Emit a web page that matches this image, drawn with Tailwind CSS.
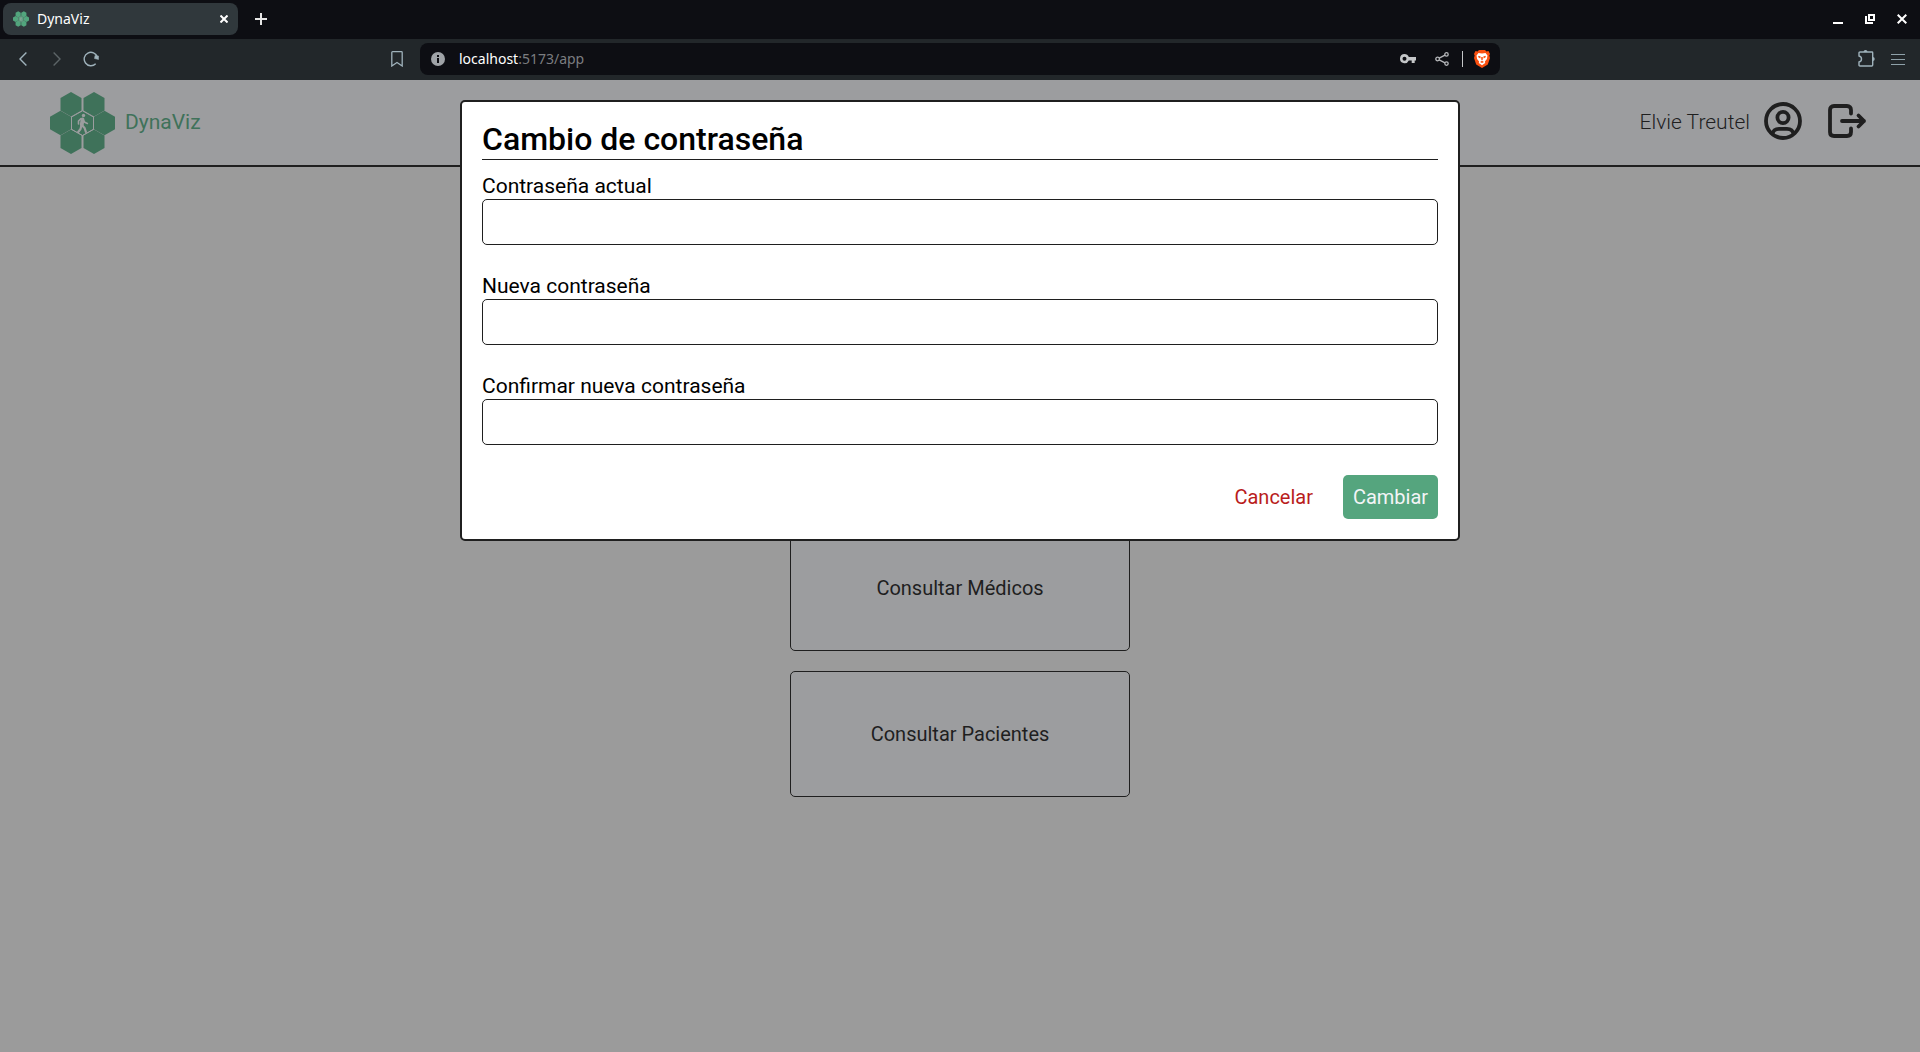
<!DOCTYPE html>
<html lang="es">
<head>
<meta charset="utf-8">
<title>DynaViz</title>
<script src="https://cdn.jsdelivr.net/npm/@tailwindcss/browser@4"></script>
</head>
<body class="flex min-h-screen flex-col bg-[#9b9b9b] font-[Roboto,sans-serif] text-xl text-[#1f1f1f]">
<svg class="hidden">
  <symbol id="logo" viewBox="0 0 65 62">
    <g fill="currentColor">
      <path id="hex" d="M21 0l10.500 6v12.500L21 24.500L10.500 18.500V6z"/>
      <use href="#hex" x="23"/>
      <use href="#hex" x="-10.500" y="18.800"/>
      <use href="#hex" x="11.500" y="18.800"/>
      <use href="#hex" x="33.500" y="18.800"/>
      <use href="#hex" y="37.500"/>
      <use href="#hex" x="23" y="37.500"/>
    </g>
    <path d="M32.500 18.800l11 6.200v12.300l-11 6.200l-11-6.200V25z" fill="none" stroke="#9c9d9f" stroke-width="1"/>
    <g stroke="#9c9d9f" fill="none" stroke-linecap="round" stroke-linejoin="round">
      <circle cx="33.500" cy="23.500" r="1.700" fill="#9c9d9f" stroke="none"/>
      <path d="M32.500 27.500L31.800 32.500" stroke-width="3.800"/>
      <path d="M31 26.700l-2.500 2.300v3M33 27.500l1.700 2.700l2.700 1.200" stroke-width="1.600"/>
      <path d="M31.500 33l-1 4l-2.300 3M32.300 33.500l2.300 2.500l1.300 4" stroke-width="2.200"/>
    </g>
  </symbol>
</svg>

<!-- Browser window frame -->
<div class="flex h-[39px] items-center bg-[#0d0e13] pb-px pl-[3px] pr-[13px] font-['Noto_Sans',sans-serif] text-sm text-white">
  <div class="flex h-8 w-[235px] items-center rounded-lg bg-[#30383c] px-[10px]">
    <svg class="h-4 w-4 text-[#52a57d]"><use href="#logo"/></svg>
    <span class="ml-2 flex-1">DynaViz</span>
    <button aria-label="Cerrar pestaña"><svg class="h-2 w-2" viewBox="0 0 8 8" stroke="currentColor" stroke-width="2"><path d="M.5 .5l7 7M7.500 .5l-7 7"/></svg></button>
  </div>
  <button class="ml-[17px]" aria-label="Nueva pestaña"><svg class="h-3 w-3" viewBox="0 0 12 12" stroke="#e6e6e6" stroke-width="2"><path d="M6 0v12M0 6h12"/></svg></button>
  <div class="ml-auto flex items-center gap-[22px]">
    <button aria-label="Minimizar"><svg class="h-[10px] w-[10px]" viewBox="0 0 10 10"><path d="M0 8h10v2H0z" fill="currentColor"/></svg></button>
    <button aria-label="Restaurar"><svg class="h-[10px] w-[10px]" viewBox="0 0 10 10" fill="none" stroke="currentColor" stroke-width="2"><path d="M4 1h5v5H4zM1 2v7h7"/></svg></button>
    <button aria-label="Cerrar"><svg class="h-[10px] w-[10px]" viewBox="0 0 10 10" stroke="currentColor" stroke-width="2"><path d="M.7 .7l8.600 8.600M9.300 .7l-8.600 8.600"/></svg></button>
  </div>
</div>
<div class="grid h-[41px] grid-cols-[1fr_1110px_1fr] items-center bg-[#22272a] pb-[2px] font-['Noto_Sans',sans-serif] text-sm text-[#9fb2bb]">
  <div class="flex items-center gap-[26px] pl-[19px]">
    <button aria-label="Atrás"><svg class="h-[14px] w-2" viewBox="0 0 8 14" fill="none" stroke="currentColor" stroke-width="1.400"><path d="M7.400 .5L1 7l6.400 6.500"/></svg></button>
    <button aria-label="Adelante"><svg class="h-[14px] w-2" viewBox="0 0 8 14" fill="none" stroke="#5c6467" stroke-width="1.400"><path d="M.6 .5L7 7L.6 13.500"/></svg></button>
    <button class="-ml-1" aria-label="Recargar"><svg class="h-4 w-4" viewBox="0 0 16 16" fill="none" stroke="currentColor" stroke-width="1.400"><path d="M14.300 6A6.700 6.700 0 1 0 12.700 12.700"/><path d="M11.500 7.500L12 4.500L15.500 5v3.500z" fill="currentColor" stroke-width=".5"/></svg></button>
  </div>
  <div class="flex items-center justify-between">
    <button class="ml-[-14px]" aria-label="Marcador"><svg class="h-4 w-3" viewBox="0 0 12 16" fill="none" stroke="currentColor" stroke-width="1.300"><path d="M.8 1.500q0-.8.8-.8h8.800q.8 0 .8.800v13.500L6 11.500L.8 15z"/></svg></button>
    <div class="ml-[17px] mr-[15px] flex h-8 flex-1 items-center rounded-lg bg-[#0d0e13] pl-[11px] pr-[10px]">
      <svg class="h-[14px] w-[14px]" viewBox="0 0 14 14"><circle cx="7" cy="7" r="7" fill="#9fa3a7"/><path d="M6 3h2v2H6zM6 6h2v5H6z" fill="#0d0e13"/></svg>
      <span class="ml-[14px] flex-1 text-[#7b7d80]"><span class="text-white">localhost</span>:5173/app</span>
      <svg class="h-[10px] w-4" viewBox="0 0 16 10"><path d="M4.500 0a4.600 4.600 0 0 1 4.300 3H16v3.500h-1.300V9h-3V6.500H8.800A4.600 4.600 0 1 1 4.500 0zm0 2.700a2 2 0 1 0 0 4a2 2 0 0 0 0-4z" fill="#c4c6c8"/></svg>
      <svg class="ml-[19px] h-[14px] w-[14px]" viewBox="0 0 14 14" fill="none" stroke="#b5b7ba" stroke-width="1.300"><circle cx="2.600" cy="7" r="1.800"/><circle cx="11.500" cy="2.400" r="1.700"/><circle cx="11.500" cy="11.600" r="1.700"/><path d="M4.200 6.200L10 3.200M4.200 7.800L10 10.800"/></svg>
      <div class="ml-[13px] h-4 w-px bg-[#c4c6c8]"></div>
      <svg class="ml-[11px] h-[18px] w-4" viewBox="0 0 16 18"><path d="M5 0h6l1.500 1.500L14.500 1L16 4l-.7 1.500L16 8l-2.200 6.500L8 18L2.200 14.500L0 8l.7-2.500L0 4L1.500 1l2 .5z" fill="#fb5010"/><path d="M4.500 3l3.500.6L11.500 3l2 2.500-.6 3.500-2 2.500.3 1.500L8 15.300L4.800 13l.3-1.500-2-2.500-.6-3.500z" fill="#fff"/><path d="M4.700 5.700l2 .9-.4 1.800L4 7zM11.300 5.700l-2 .9.400 1.800L12 7zM7.200 7h1.600v2.500L8 10.500 7.200 9.500zM6 12l2-1.200L10 12l-2 .9z" fill="#fb5010"/></svg>
    </div>
  </div>
  <div class="flex items-center justify-end gap-4 pr-[15px]">
    <button aria-label="Extensiones"><svg class="h-[17px] w-[17px]" viewBox="0 0 17 17" fill="none" stroke="currentColor" stroke-width="1.400"><path d="M1 3q0-1 1-1h12q.7 0 .7.700V15q0 1-1 1H2q-1 0-1-1v-3q2.500-.5 2.500-3T1 6z"/><path d="M5.500 2a2 2 0 0 1 4 0zM14.700 7a2 2 0 0 1 0 4z" fill="currentColor" stroke="none"/></svg></button>
    <button aria-label="Menú"><svg class="h-3 w-[14px]" viewBox="0 0 14 12" stroke="#8fa1a9" stroke-width="1"><path d="M0 1.500h14M0 6.500h14M0 11.500h14"/></svg></button>
  </div>
</div>

<!-- Application -->
<div class="relative flex flex-1 flex-col">
  <header class="flex h-[87px] items-center border-b-2 border-[#1f1f1f] bg-[#9c9d9f] pl-[50px] pr-[53px]">
    <a href="#" class="flex items-center gap-[10px] text-[#3f725a]">
      <svg class="h-[62px] w-[65px]"><use href="#logo"/></svg>
      <span class="text-[21px]">DynaViz</span>
    </a>
    <div class="ml-auto flex items-center">
      <span class="text-[21px] font-light">Elvie Treutel</span>
      <button class="ml-[14px] pb-1" aria-label="Perfil"><svg class="h-[38px] w-[38px]" viewBox="0 0 38 38" fill="none" stroke="currentColor" stroke-width="3.800"><circle cx="19" cy="19" r="17"/><circle cx="19" cy="15.500" r="5.600"/><path d="M8.500 32.500c0-4 3-5.700 6.500-5.700h8c3.500 0 6.500 1.700 6.500 5.700"/></svg></button>
      <button class="ml-[26px] pb-1" aria-label="Salir"><svg class="h-[34px] w-[39px]" viewBox="0 0 39 34" fill="none" stroke="currentColor" stroke-width="3.800" stroke-linecap="round" stroke-linejoin="round"><path d="M23 9.500V6q0-4-4-4H6Q2 2 2 6v22q0 4 4 4h13q4 0 4-4v-3.500M14 17h22M30.500 11.500L36 17l-5.500 5.500"/></svg></button>
    </div>
  </header>
  <main class="flex flex-col items-center gap-5 pt-[358px]">
    <button class="h-[126px] w-[340px] rounded-[5px] border border-[#1f1f1f] bg-[#9c9d9f]">Consultar Médicos</button>
    <button class="h-[126px] w-[340px] rounded-[5px] border border-[#1f1f1f] bg-[#9c9d9f]">Consultar Pacientes</button>
  </main>

  <div class="absolute inset-x-0 top-5 flex justify-center">
    <form role="dialog" aria-labelledby="titulo" class="flex w-full max-w-[1000px] flex-col rounded-[5px] border-2 border-[#1f1f1f] bg-white p-5 pt-[18px] text-[21px] text-black">
      <h1 id="titulo" class="border-b border-[#1f1f1f] text-[32px] leading-[39px] font-medium">Cambio de contraseña</h1>
      <label for="actual" class="mt-[14px] leading-[25px]">Contraseña actual</label>
      <input id="actual" type="password" class="h-[46px] rounded-[5px] border border-[#1f1f1f] px-2">
      <label for="nueva" class="mt-[29px] leading-[25px]">Nueva contraseña</label>
      <input id="nueva" type="password" class="h-[46px] rounded-[5px] border border-[#1f1f1f] px-2">
      <label for="confirmar" class="mt-[29px] leading-[25px]">Confirmar nueva contraseña</label>
      <input id="confirmar" type="password" class="h-[46px] rounded-[5px] border border-[#1f1f1f] px-2">
      <div class="mt-[30px] flex h-11 items-center justify-end gap-5 text-xl">
        <button type="button" class="h-11 px-[10px] text-[#b91c1c]">Cancelar</button>
        <button type="button" class="h-11 w-[95px] rounded-[5px] bg-[#55a57e] text-[#f3f4f6]">Cambiar</button>
      </div>
    </form>
  </div>
</div>
</body>
</html>
